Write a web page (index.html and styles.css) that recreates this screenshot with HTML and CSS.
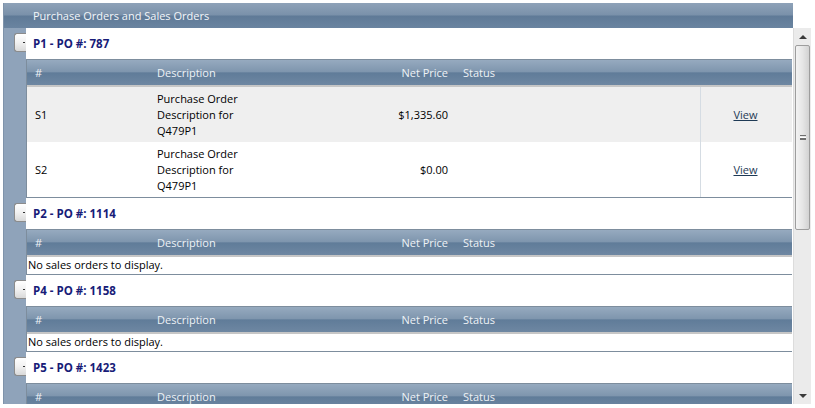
FILE: index.html
```html
<!DOCTYPE html>
<html>
<head>
<meta charset="utf-8">
<link rel="stylesheet" href="styles.css">
</head>
<body>
<div class="frame">
  <div class="titlebar">Purchase Orders and Sales Orders</div>
  <div class="body">
    <div class="list">
      <div class="group">
        <div class="strip"><span class="toggle"><i></i></span></div>
        <div class="main">
          <div class="ghead">P1 - PO #: 787</div>
          <div class="grid">
            <div class="row hdr"><span class="c1">#</span><span class="c2">Description</span><span class="c3">Net Price</span><span class="c4">Status</span><span class="c5"></span></div>
            <div class="row data alt"><span class="c1">S1</span><span class="c2">Purchase Order Description for Q479P1</span><span class="c3">$1,335.60</span><span class="c4"></span><span class="c5"><a>View</a></span></div>
            <div class="row data"><span class="c1">S2</span><span class="c2">Purchase Order Description for Q479P1</span><span class="c3">$0.00</span><span class="c4"></span><span class="c5"><a>View</a></span></div>
          </div>
        </div>
      </div>
      <div class="group">
        <div class="strip"><span class="toggle"><i></i></span></div>
        <div class="main">
          <div class="ghead">P2 - PO #: 1114</div>
          <div class="grid">
            <div class="row hdr"><span class="c1">#</span><span class="c2">Description</span><span class="c3">Net Price</span><span class="c4">Status</span><span class="c5"></span></div>
            <div class="empty">No sales orders to display.</div>
          </div>
        </div>
      </div>
      <div class="group">
        <div class="strip"><span class="toggle"><i></i></span></div>
        <div class="main">
          <div class="ghead">P4 - PO #: 1158</div>
          <div class="grid">
            <div class="row hdr"><span class="c1">#</span><span class="c2">Description</span><span class="c3">Net Price</span><span class="c4">Status</span><span class="c5"></span></div>
            <div class="empty">No sales orders to display.</div>
          </div>
        </div>
      </div>
      <div class="group">
        <div class="strip"><span class="toggle"><i></i></span></div>
        <div class="main">
          <div class="ghead">P5 - PO #: 1423</div>
          <div class="grid">
            <div class="row hdr"><span class="c1">#</span><span class="c2">Description</span><span class="c3">Net Price</span><span class="c4">Status</span><span class="c5"></span></div>
            <div class="empty">No sales orders to display.</div>
          </div>
        </div>
      </div>
    </div>
    <div class="scrollbar">
      <div class="sbtn up"><span class="tri-up"></span></div>
      <div class="track">
        <div class="thumb"><span class="grip"></span></div>
      </div>
      <div class="sbtn down"><span class="tri-down"></span></div>
    </div>
  </div>
</div>
</body>
</html>
```

FILE: styles.css
```css
* { box-sizing: border-box; }
html, body { margin: 0; padding: 0; background: #ffffff; }
body {
  font-family: "Open Sans", "Noto Sans", sans-serif;
  font-size: 11px;
  color: #000;
  width: 815px;
  height: 408px;
  overflow: hidden;
}
.frame {
  margin: 3px 0 0 3px;
  width: 808px;
}
.titlebar {
  width: 790px;
  height: 25px;
  padding-left: 29px;
  line-height: 25px;
  color: #f3f6f9;
  font-size: 11px;
  border-left: 1px solid #7f93aa;
  background: linear-gradient(#8ea2b8 0%, #7a91aa 48%, #5f7a97 52%, #6a84a0 100%);
}
.body {
  display: flex;
  height: 376px;
}
.list {
  width: 790px;
  height: 376px;
  overflow: hidden;
  background: #8fa3ba;
  border-left: 1px solid #7f93aa;
}
.group {
  display: flex;
}
.strip {
  width: 22px;
  flex: none;
  padding: 5px 0 0 10px;
}
.toggle {
  display: block;
  position: relative;
  width: 12px;
  height: 19px;
  border: 1px solid #8c8c8c;
  border-right: none;
  border-radius: 3px 0 0 3px;
  background: linear-gradient(#ffffff 0%, #f1f1f1 50%, #d9d9d9 100%);
}
.toggle i {
  position: absolute;
  right: 1px;
  top: 8px;
  width: 2px;
  height: 1px;
  background: #333;
}
.main {
  width: 767px;
  background: #ffffff;
}
.ghead {
  height: 31px;
  padding-left: 7px;
  line-height: 31px;
  font-weight: bold;
  font-size: 11.5px;
  color: #181c78;
}
.grid {
  width: 766px;
  border: 1px solid #7d8d9d;
  border-right: none;
}
.row {
  display: flex;
}
.row span { display: block; }
.c1 { width: 122px; padding-left: 8px; }
.c2 { width: 105px; padding-left: 8px; }
.c3 { width: 201px; padding-right: 7px; text-align: right; }
.c4 { width: 245px; padding-left: 8px; }
.c5 { flex: 1; text-align: center; }
.hdr {
  height: 27px;
  line-height: 25px;
  color: #eef2f6;
  border-bottom: 2px solid #c6c6c6;
  background: linear-gradient(#96aabf 0%, #7f96ae 46%, #607c99 52%, #6e87a2 100%);
}
.data {
  height: 55px;
  align-items: center;
  line-height: 16px;
}
.data.alt { background: #efefef; }
.data .c5 {
  align-self: stretch;
  display: flex;
  align-items: center;
  justify-content: center;
  padding-right: 2px;
  border-left: 1px solid #d5dce3;
}
.data .c5 a {
  color: #1e3a55;
  text-decoration: underline;
}
.empty {
  height: 17px;
  line-height: 16px;
  padding-left: 1px;
}
.scrollbar {
  width: 18px;
  height: 376px;
  display: flex;
  flex-direction: column;
  background: #ebebeb;
  border-left: 1px solid #dcdcdc;
}
.sbtn {
  height: 17px;
  display: flex;
  align-items: center;
  justify-content: center;
}
.tri-up {
  width: 0; height: 0;
  border-left: 4px solid transparent;
  border-right: 4px solid transparent;
  border-bottom: 4px solid #3a3a3a;
}
.tri-down {
  width: 0; height: 0;
  border-left: 4px solid transparent;
  border-right: 4px solid transparent;
  border-top: 4px solid #3a3a3a;
}
.track {
  flex: 1;
  padding: 0 1px;
}
.thumb {
  height: 185px;
  border: 1px solid #9d9d9d;
  border-radius: 2px;
  background: linear-gradient(90deg, #f3f3f3 0%, #e6e6e6 50%, #d2d2d2 100%);
  display: flex;
  align-items: center;
  justify-content: center;
}
.grip {
  width: 6px;
  height: 5px;
  border-top: 1px solid #6e6e6e;
  border-bottom: 1px solid #6e6e6e;
  background: linear-gradient(#fff 0 1px, #6e6e6e 1px 2px, transparent 2px);
  background-position: 0 1px;
  background-repeat: no-repeat;
}
```
